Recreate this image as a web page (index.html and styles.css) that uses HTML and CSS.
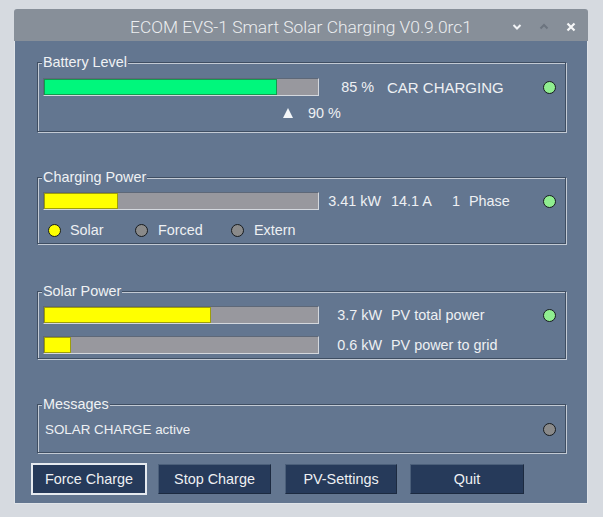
FILE: index.html
```html
<!DOCTYPE html>
<html>
<head>
<meta charset="utf-8">
<link rel="stylesheet" href="styles.css">
</head>
<body>
<div class="window">
  <div class="titlebar">
    <span></span>
    <span class="title">ECOM EVS-1 Smart Solar Charging V0.9.0rc1</span>
    <div class="controls">
      <svg class="ic" width="10" height="10" viewBox="0 0 10 10"><polyline points="1.5,3 5,6.5 8.5,3" fill="none" stroke="#f2f4f6" stroke-width="2"/></svg>
      <svg class="ic" width="10" height="10" viewBox="0 0 10 10"><polyline points="1.5,6.5 5,3 8.5,6.5" fill="none" stroke="#6c747f" stroke-width="2"/></svg>
      <svg class="ic" width="10" height="10" viewBox="0 0 10 10"><path d="M1.5,1.5 L8.5,8.5 M8.5,1.5 L1.5,8.5" fill="none" stroke="#f6f7f8" stroke-width="2.2"/></svg>
    </div>
  </div>
  <div class="body">
    <fieldset class="frame f-battery">
      <legend>Battery Level</legend>
      <div class="row bar-row first">
        <div class="bar"><div class="fill green" style="width:85%"></div></div>
        <span class="val v-bat">85 %</span>
        <span class="status">CAR CHARGING</span>
        <span class="led on"></span>
      </div>
      <div class="row sub-row">
        <span class="tri"></span>
        <span class="target">90 %</span>
      </div>
    </fieldset>

    <fieldset class="frame f-charge">
      <legend>Charging Power</legend>
      <div class="row bar-row first">
        <div class="bar"><div class="fill yellow" style="width:27%"></div></div>
        <span class="val v-kw">3.41 kW</span>
        <span class="amp">14.1 A</span>
        <span class="phase-n">1</span>
        <span class="phase">Phase</span>
        <span class="led on"></span>
      </div>
      <div class="row radio-row">
        <span class="opt o-solar"><span class="radio sel"></span>Solar</span>
        <span class="opt o-forced"><span class="radio"></span>Forced</span>
        <span class="opt o-extern"><span class="radio"></span>Extern</span>
      </div>
    </fieldset>

    <fieldset class="frame f-solar">
      <legend>Solar Power</legend>
      <div class="row bar-row first">
        <div class="bar"><div class="fill yellow" style="width:61%"></div></div>
        <span class="val v-pv">3.7 kW</span>
        <span class="pvlabel">PV total power</span>
        <span class="led on"></span>
      </div>
      <div class="row bar-row second">
        <div class="bar"><div class="fill yellow" style="width:10%"></div></div>
        <span class="val v-pv">0.6 kW</span>
        <span class="pvlabel">PV power to grid</span>
      </div>
    </fieldset>

    <fieldset class="frame f-msg">
      <legend>Messages</legend>
      <div class="row msg-row">
        <span class="msg">SOLAR CHARGE active</span>
        <span class="led off"></span>
      </div>
    </fieldset>

    <div class="buttons">
      <button class="btn b-force focus">Force Charge</button>
      <button class="btn b-stop">Stop Charge</button>
      <button class="btn b-pv">PV-Settings</button>
      <button class="btn b-quit">Quit</button>
    </div>
  </div>
</div>
</body>
</html>
```

FILE: styles.css
```css
html, body {
  margin: 0;
  padding: 0;
}
body {
  background: #d6dae0;
  width: 603px;
  height: 517px;
  overflow: hidden;
  font-family: "Liberation Sans", Arial, sans-serif;
  font-size: 14.4px;
  color: #eef0f3;
}
.window {
  margin: 9px 0 0 14px;
  width: 574px;
}
.titlebar {
  height: 32px;
  box-sizing: border-box;
  padding-top: 3px;
  background: #878f99;
  border-radius: 3px 3px 0 0;
  display: grid;
  grid-template-columns: 1fr auto 1fr;
  align-items: center;
}
.title {
  font-family: Roboto, "Liberation Sans", sans-serif;
  font-weight: 300;
  font-size: 17.4px;
  color: #eceef0;
  white-space: nowrap;
}
.controls {
  justify-self: end;
  display: flex;
  align-items: center;
  gap: 17px;
  padding-right: 12px;
}
.ic { display: block; }
.body {
  background: #637690;
  border: 1px solid #dfe3e8;
  border-top: none;
  padding: 13px 20px 8px 22px;
  display: flex;
  flex-direction: column;
}
.frame {
  margin: 0;
  padding: 0;
  min-width: 0;
  box-sizing: border-box;
  width: 529px;
  border: 1px solid #3f4e62;
  box-shadow: inset 1px 1px 0 #c3cad4, 1px 1px 0 #c3cad4;
}
.frame legend {
  position: relative;
  padding: 0 1px;
  margin-left: 4px;
  line-height: 16px;
  font-size: 14.4px;
  background: #637690;
  color: #f0f2f4;
}
.f-battery { height: 78px; }
.f-charge { height: 75px; margin-top: 37px; }
.f-solar { height: 76px; margin-top: 39px; }
.f-msg { height: 57px; margin-top: 37px; }

.row {
  display: flex;
  align-items: center;
  padding-left: 5px;
  padding-right: 9px;
  white-space: nowrap;
}
.bar-row { height: 18px; }
.f-battery .first { margin-top: 8px; }
.f-charge .first { margin-top: 7px; }
.f-solar .first { margin-top: 7px; }
.f-solar .second { margin-top: 12px; }

.bar {
  width: 276px;
  height: 18px;
  box-sizing: border-box;
  background: #98989e;
  border-top: 1px solid #5e6878;
  border-left: 1px solid #5e6878;
  border-right: 1px solid #d4d8de;
  border-bottom: 1px solid #d4d8de;
  flex: none;
}
.fill {
  height: 100%;
  box-sizing: border-box;
  border: 1px solid rgba(40, 40, 20, 0.45);
}
.fill.green { background: #00f77c; }
.fill.yellow { background: #ffff00; }

.val { text-align: right; flex: none; }
.v-bat { width: 55px; }
.v-kw { width: 62px; }
.v-pv { width: 63px; }
.status { margin-left: 13px; font-size: 15px; }
.amp { margin-left: 10px; width: 61px; flex: none; }
.phase-n { width: 17px; flex: none; }
.pvlabel { margin-left: 9px; }

.led {
  margin-left: auto;
  width: 13px;
  height: 13px;
  box-sizing: border-box;
  border-radius: 50%;
  border: 1px solid #161a1e;
  flex: none;
}
.led.on { background: #90ee90; }
.led.off { background: #8a8a8a; }

.sub-row {
  margin-top: 9px;
  height: 16px;
  padding-left: 245px;
}
.tri {
  width: 0;
  height: 0;
  border-left: 5px solid transparent;
  border-right: 5px solid transparent;
  border-bottom: 10px solid #f4f6f8;
  margin-top: -1px;
}
.target { margin-left: 15px; }

.radio-row {
  margin-top: 12px;
  height: 16px;
}
.opt {
  display: flex;
  align-items: center;
  flex: none;
}
.o-solar { width: 87px; margin-left: 5px; }
.o-forced { width: 96px; }
.radio {
  width: 13px;
  height: 13px;
  box-sizing: border-box;
  border-radius: 50%;
  border: 1px solid #161a1e;
  background: #8a8a8a;
  margin-right: 9px;
  flex: none;
}
.o-forced .radio, .o-extern .radio { margin-right: 10px; }
.radio.sel { background: #ffff00; }

.msg-row {
  margin-top: 9px;
  height: 16px;
  padding-left: 7px;
}
.msg { font-size: 13.4px; }

.buttons {
  margin-top: 10px;
  margin-left: -6px;
  display: flex;
  align-items: center;
  height: 32px;
}
.btn {
  font-family: "Liberation Sans", Arial, sans-serif;
  font-size: 14.4px;
  color: #eef0f3;
  background: #263a5a;
  height: 30px;
  box-sizing: border-box;
  border: 1px solid #4b5f7a;
  border-right-color: #1c2a40;
  border-bottom-color: #1c2a40;
  padding: 0;
  flex: none;
}
.btn.focus {
  height: 32px;
  border: 2px solid #e6eaef;
}
.b-force { width: 116px; }
.b-stop { width: 113px; margin-left: 11px; }
.b-pv { width: 112px; margin-left: 14px; }
.b-quit { width: 114px; margin-left: 13px; }
```
